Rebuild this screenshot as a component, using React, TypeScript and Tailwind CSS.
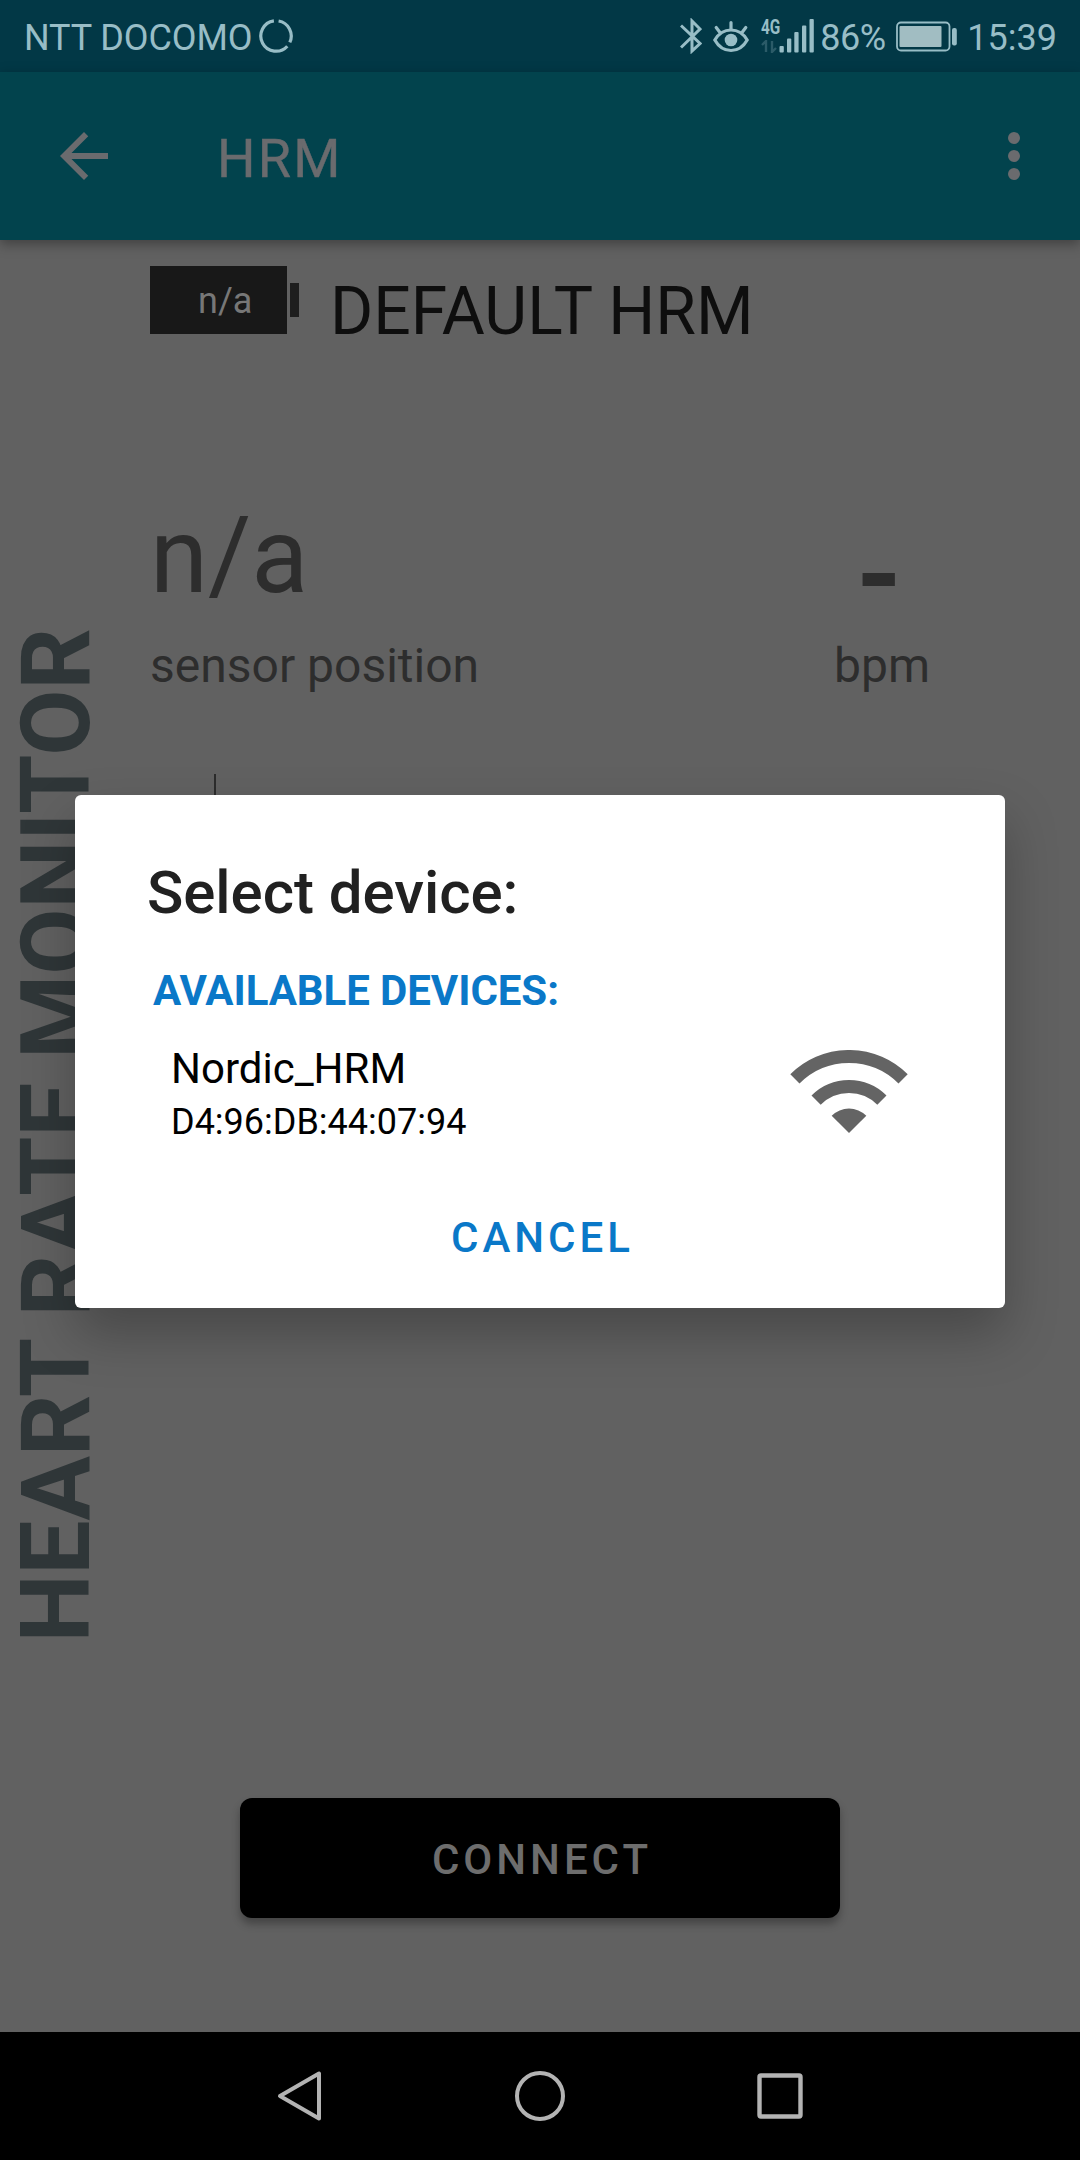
function StatusBar() {
  return (
    <div className="flex h-[72px] items-start bg-[#023846] pl-6 pr-[23px] text-[36px] leading-[76px] text-[#98bdc6]">
      <span className="tracking-[-0.1px]">NTT DOCOMO</span>
      <svg className="ml-[6.5px] mt-[19px] h-[34px] w-[34px]" viewBox="0 0 34 34" fill="none" stroke="currentColor" strokeWidth="3.2">
        <path d="M19.6 2A15.2 15.2 0 0 1 30.8 23.4" />
        <path d="M28.3 27.2A15.2 15.2 0 1 1 14.9 1.95" />
      </svg>
      <div className="ml-auto flex items-start">
        <svg className="mt-[18px] h-[36px] w-[22px]" viewBox="0 0 22 36" fill="none" stroke="currentColor" strokeWidth="3" strokeLinejoin="miter">
          <path d="M1 7.5 20 25.5 12 33V3l8 8L1 29.5" />
        </svg>
        <svg className="ml-[11px] mt-[20px] h-[34px] w-[36px]" viewBox="0 0 36 34" fill="none" stroke="currentColor" strokeWidth="3.2" strokeLinecap="round">
          <path d="M1.8 20C6 13 11.5 10 18 10s12 3 16.2 10C30 27.5 24.5 30.5 18 30.5S6 27.5 1.8 20Z" />
          <path d="M18 2.5V9M3.2 7.5l3.6 4.8M32.8 7.5l-3.6 4.8" />
          <circle cx="18" cy="20" r="6.3" fill="currentColor" stroke="none" />
        </svg>
        <div className="ml-[12px] mt-[18px] flex w-[18px] flex-col items-start">
          <span className="origin-left scale-x-[0.77] text-[20px] font-bold leading-[18px]">4G</span>
          <svg className="mt-[4px] h-[13px] w-[17px]" viewBox="0 0 17 13" fill="none" stroke="#2b5b68" strokeWidth="2.4">
            <path d="M5 12V1L1 5M11 1v11l4-4" />
          </svg>
        </div>
        <svg className="mt-[18px] h-[36px] w-[36px]" viewBox="0 0 36 36" fill="currentColor">
          <rect x="0.5" y="28" width="4.3" height="6.5" rx="1" />
          <rect x="8" y="20.5" width="4.3" height="14" rx="1" />
          <rect x="15.3" y="14" width="4.3" height="20.5" rx="1" />
          <rect x="23" y="7.5" width="4.3" height="27" rx="1" />
          <rect x="30.5" y="1" width="4.3" height="33.5" rx="1" />
        </svg>
        <span className="ml-[5.5px] tracking-[-0.4px]">86%</span>
        <svg className="ml-[10.5px] mt-[21px] h-[31px] w-[62px]" viewBox="0 0 62 31">
          <rect x="1" y="1.5" width="52.5" height="28" rx="4" fill="none" stroke="currentColor" strokeWidth="1.8" />
          <rect x="3.5" y="5" width="42" height="21" rx="1" fill="#a1bdc2" />
          <rect x="56" y="7" width="4.8" height="17.5" rx="2" fill="currentColor" />
        </svg>
        <span className="ml-[9px]">15:39</span>
      </div>
    </div>
  );
}

function AppBar() {
  return (
    <header className="relative flex h-[168px] items-center bg-[#02434d] pl-12 pr-[30px] text-[#6a6b6e] shadow-[0_4px_12px_rgba(0,0,0,0.35)]">
      <svg className="h-[72px] w-[72px]" viewBox="0 0 24 24" fill="currentColor">
        <path d="M20 11H7.83l5.59-5.59L12 4l-8 8 8 8 1.41-1.41L7.83 13H20v-2z" />
      </svg>
      <h1 className="ml-[97px] pt-[5px] text-[54px] leading-[64px] tracking-[2.2px] [-webkit-text-stroke:0.4px_#6a6b6e]">HRM</h1>
      <svg className="ml-auto h-[72px] w-[72px]" viewBox="0 0 24 24" fill="currentColor">
        <circle cx="12" cy="6" r="2" />
        <circle cx="12" cy="12" r="2" />
        <circle cx="12" cy="18" r="2" />
      </svg>
    </header>
  );
}

function BatteryBadge() {
  return (
    <div className="flex items-center gap-[3px]">
      <div className="h-[68px] w-[137px] bg-[#181818] pl-[48px] text-[36px] leading-[71px] text-[#777]">n/a</div>
      <div className="h-[34px] w-[9px] bg-[#1e1e1e]" />
    </div>
  );
}

function Monitor() {
  return (
    <main className="flex flex-1 bg-[#616161]">
      <div className="flex w-[112px] items-center">
        <div className="mb-[2px] rotate-180 whitespace-nowrap text-[96px] font-bold leading-[112px] tracking-[0.02px] text-[#2f3638] [writing-mode:vertical-rl]">
          HEART RATE MONITOR
        </div>
      </div>
      <div className="flex flex-1 flex-col pl-[38px] pr-[150px] pt-[26px]">
        <div className="flex items-start">
          <BatteryBadge />
          <span className="ml-[31px] mt-[6px] whitespace-nowrap text-[66px] leading-[80px] text-[#0e0e0e]">DEFAULT HRM</span>
        </div>
        <div className="mt-[145px] flex justify-between text-[#2d2d2d]">
          <div>
            <div className="text-[105px] leading-[120px]">n/a</div>
            <div className="mt-[19px] text-[48px] leading-[60px]">sensor position</div>
          </div>
          <div className="flex w-[96px] flex-col items-center">
            <div className="pt-[35px] text-[117px] font-bold leading-[86px] -translate-x-[3px]">-</div>
            <div className="mt-[18px] text-[48px] leading-[60px]">bpm</div>
          </div>
        </div>
        <div className="ml-16 mt-[78px] h-[24px] w-[2px] bg-[#2c2c2c]" />
        <button className="mb-[114px] ml-[90px] mt-auto h-[120px] w-[600px] rounded-[12px] bg-black pl-[4px] pt-[3px] text-[42px] font-medium leading-[50px] tracking-[4px] text-[#6d6d6d] shadow-[0_6px_8px_rgba(0,0,0,0.3)]">
          CONNECT
        </button>
      </div>
    </main>
  );
}

function NavBar() {
  return (
    <nav className="flex h-[128px] items-center justify-center gap-[180px] bg-black text-[#b3b3b3]">
      <svg className="h-[60px] w-[60px]" viewBox="0 0 60 60" fill="none" stroke="currentColor" strokeWidth="4" strokeLinejoin="round">
        <path d="M49 7.5V52.5L10 30Z" />
      </svg>
      <svg className="h-[60px] w-[60px]" viewBox="0 0 60 60" fill="none" stroke="currentColor" strokeWidth="4">
        <circle cx="30" cy="30" r="23" />
      </svg>
      <svg className="h-[60px] w-[60px]" viewBox="0 0 60 60" fill="none" stroke="currentColor" strokeWidth="4.4">
        <rect x="9.5" y="9.5" width="41" height="41" rx="1.5" />
      </svg>
    </nav>
  );
}

function SignalIcon() {
  return (
    <svg className="h-[84px] w-[118px]" viewBox="0 0 118 84" fill="none" stroke="#646464" strokeWidth="13">
      <path d="M4.9 28.9A76.5 76.5 0 0 1 113.1 28.9" />
      <path d="M26.1 50.1A46.5 46.5 0 0 1 91.9 50.1" />
      <path d="M59 83 41.7 65.7A24.5 24.5 0 0 1 76.3 65.7Z" fill="#646464" stroke="none" />
    </svg>
  );
}

function DeviceDialog() {
  return (
    <div className="absolute inset-0 flex justify-center pt-[795px]">
      <section className="flex h-[513px] w-[930px] flex-col rounded-[6px] bg-white pt-[63px] shadow-[0_26px_52px_rgba(0,0,0,0.26)]">
        <h2 className="pl-[72px] text-[60px] font-medium leading-[70px] tracking-[-0.05px] text-[#212121]">Select device:</h2>
        <h3 className="mt-[38px] pl-[78px] text-[42px] font-bold leading-[50px] tracking-[-0.08px] text-[#0a78c8]">AVAILABLE DEVICES:</h3>
        <div className="mt-[28px] flex items-start justify-between pl-[96px] pr-[97px]">
          <div className="text-black">
            <div className="text-[42px] leading-[50px]">Nordic_HRM</div>
            <div className="mt-[6px] text-[36px] leading-[44px]">D4:96:DB:44:07:94</div>
          </div>
          <div className="pt-[6px]">
            <SignalIcon />
          </div>
        </div>
        <button className="mt-[69px] pl-[5px] text-[42px] font-medium leading-[50px] tracking-[4px] text-[#0a78c8]">CANCEL</button>
      </section>
    </div>
  );
}

export default function App() {
  return (
    <div className="relative flex h-[2160px] w-[1080px] flex-col overflow-hidden font-[Roboto,sans-serif]">
      <StatusBar />
      <AppBar />
      <Monitor />
      <NavBar />
      <DeviceDialog />
    </div>
  );
}
